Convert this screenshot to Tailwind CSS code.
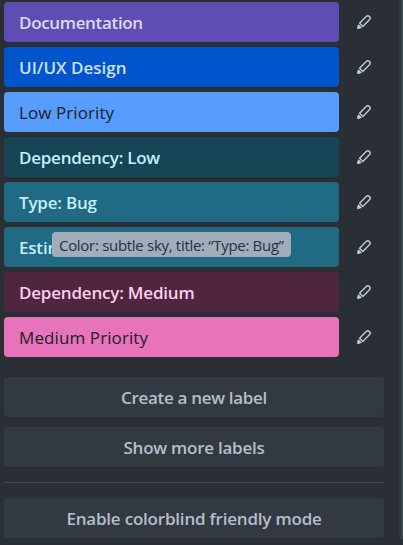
<!DOCTYPE html>
<html lang="en">
<head>
<meta charset="utf-8">
<title>Labels</title>
<script src="https://cdn.jsdelivr.net/npm/@tailwindcss/browser@4"></script>
</head>
<body class="h-[545px] w-[403px] overflow-hidden bg-[#2a2e35] font-['Open_Sans','Noto_Sans',sans-serif] text-[17px] leading-[41px] font-semibold">
<svg class="hidden"><symbol id="pen" viewBox="0 0 16 16"><path d="M3.6 9.2 10.2 2.6A2.26 2.26 0 0 1 13.4 5.8L6.8 12.4Z" fill="none" stroke="currentColor" stroke-width="1.4" stroke-linejoin="round"/><path d="M2.5 10.2 5.8 13.5Q4.6 14.9 2 15Q1 15 1 14Q1.1 11.6 2.5 10.2Z" fill="currentColor"/></symbol></svg>
<div class="relative flex h-full">
<main class="w-[399px] shrink-0 pt-[2px] pl-1">
<ul class="flex flex-col gap-[5px] text-[#c0ccd8]">
<li class="flex items-center"><div class="h-10 w-[335px] rounded bg-[#5e4db2] pl-[15px] text-[#dfd8fd]"><span class="tracking-[-0.33px]">Documentation</span></div><svg class="ml-[17px] size-4"><use href="#pen"/></svg></li>
<li class="flex items-center"><div class="h-10 w-[335px] rounded bg-[#0055cc] pl-[15px] text-[#cce0ff]"><span class="tracking-[0px]">UI/UX Design</span></div><svg class="ml-[17px] size-4"><use href="#pen"/></svg></li>
<li class="flex items-center"><div class="h-10 w-[335px] rounded bg-[#579dff] pl-[15px] font-normal text-[#1d2125]"><span class="tracking-[0.08px]">Low Priority</span></div><svg class="ml-[17px] size-4"><use href="#pen"/></svg></li>
<li class="flex items-center"><div class="h-10 w-[335px] rounded bg-[#164555] pl-[15px] text-[#c6edfb]"><span class="tracking-[-0.25px]">Dependency: Low</span></div><svg class="ml-[17px] size-4"><use href="#pen"/></svg></li>
<li class="flex items-center"><div class="h-10 w-[335px] rounded bg-[#206a83] pl-[15px] text-[#c6edfb]"><span class="tracking-[-0.2px]">Type: Bug</span></div><svg class="ml-[17px] size-4"><use href="#pen"/></svg></li>
<li class="flex items-center"><div class="h-10 w-[335px] rounded bg-[#206a83] pl-[15px] text-[#c6edfb]"><span class="tracking-[-0.2px]">Estim</span></div><svg class="ml-[17px] size-4"><use href="#pen"/></svg></li>
<li class="flex items-center"><div class="h-10 w-[335px] rounded bg-[#50253f] pl-[15px] text-[#fdd0ec]"><span class="tracking-[-0.2px]">Dependency: Medium</span></div><svg class="ml-[17px] size-4"><use href="#pen"/></svg></li>
<li class="flex items-center"><div class="h-10 w-[335px] rounded bg-[#e774bb] pl-[15px] font-normal text-[#1d2125]"><span class="tracking-[0.1px]">Medium Priority</span></div><svg class="ml-[17px] size-4"><use href="#pen"/></svg></li>
</ul>
<div class="mt-5 flex w-[380px] flex-col text-center leading-[42px] text-[#b3bfcd]">
<button class="h-10 rounded bg-[#333940]"><span class="tracking-[-0.32px]">Create a new label</span></button>
<button class="mt-[10px] h-10 rounded bg-[#333940]"><span class="tracking-[-0.25px]">Show more labels</span></button>
<hr class="mt-[15px] mb-[15px] border-t border-[#42474f]">
<button class="h-10 rounded bg-[#333940]"><span class="tracking-[-0.2px]">Enable colorblind friendly mode</span></button>
</div>
</main>
<div class="h-[539px] w-1 border-l-2 border-[#30373f] bg-[#3b4951]"></div>
<div role="tooltip" class="absolute top-[232px] left-[52px] h-[25px] w-[239px] rounded bg-[#9fadbc] pl-[7px] text-[15px] leading-[27px] font-normal whitespace-nowrap text-[#2b3036]"><span class="tracking-[-0.3px]">Color: subtle sky, title: “Type: Bug”</span></div>
</div>
</body>
</html>
